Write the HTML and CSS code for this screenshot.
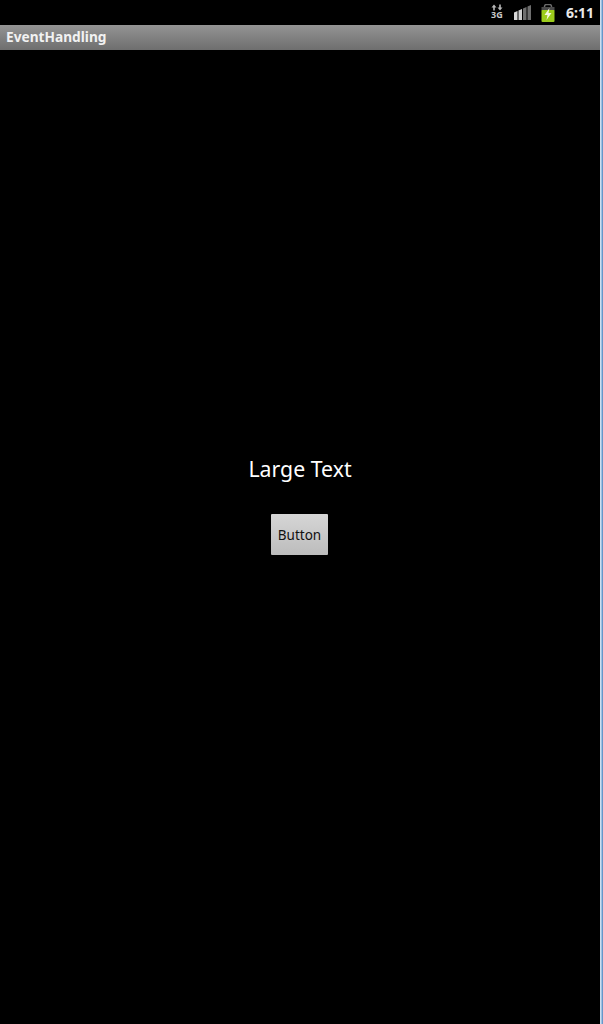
FILE: index.html
```html
<!DOCTYPE html>
<html lang="en">
<head>
    <meta charset="UTF-8">
    <title>EventHandling</title>
    <link rel="stylesheet" href="styles.css">
</head>
<body>
    <div class="screen">
        <div class="status-bar">
            <svg class="icon-data" width="12" height="17" viewBox="0 0 12 17">
                <path d="M3 0.5 L0.5 3.5 H2.2 V6.5 H3.8 V3.5 H5.5 Z M8.2 0.5 V3.5 H6.5 L9 6.5 L11.5 3.5 H9.8 V0.5 Z" fill="#b8b8b8"/>
                <text x="0" y="14" class="icon-data-text">3G</text>
            </svg>
            <svg class="icon-signal" width="17" height="15" viewBox="0 0 17 15">
                <path d="M0 7.5 L3.5 6 V15 H0 Z" fill="#dadada"/>
                <path d="M4.5 5.5 L8 4 V15 H4.5 Z" fill="#d0d0d0"/>
                <path d="M9 3.5 L12.5 2 V15 H9 Z" fill="#6e6e6e"/>
                <path d="M13.5 1.5 L17 0 V15 H13.5 Z" fill="#6e6e6e"/>
            </svg>
            <svg class="icon-battery" width="14" height="18" viewBox="0 0 14 18">
                <path d="M3.5 5 V2.5 Q3.5 0.5 5.5 0.5 H8.5 Q10.5 0.5 10.5 2.5 V5" fill="none" stroke="#6a6a6a" stroke-width="1.5"/>
                <rect x="0.5" y="3" width="13" height="4" fill="#4a4a4a"/>
                <rect x="0.5" y="6" width="13" height="12" rx="1" fill="#9ccc1c"/>
                <path d="M8.5 4 L3.5 11 H6.5 L5.5 16 L10.5 9 H7.5 Z" fill="#f4f7e0"/>
            </svg>
            <span class="clock">6:11</span>
        </div>
        <div class="title-bar">EventHandling</div>
        <div class="content">
            <div class="large-text">Large Text</div>
            <button class="btn">Button</button>
        </div>
    </div>
    <div class="edge"></div>
</body>
</html>
```

FILE: styles.css
```css
html, body {
    height: 100%;
}
body {
    margin: 0;
    display: flex;
    background: #000;
    font-family: "Noto Sans", "Open Sans", sans-serif;
    overflow: hidden;
}
.screen {
    width: 600px;
    height: 1024px;
    display: flex;
    flex-direction: column;
    background: #000;
}
.status-bar {
    height: 25px;
    display: flex;
    align-items: center;
    justify-content: flex-end;
    padding-right: 6px;
    box-sizing: border-box;
}
.icon-data {
    margin-right: 11px;
}
.icon-data-text {
    font-family: "Noto Sans", sans-serif;
    font-size: 9px;
    font-weight: bold;
    fill: #c8c8c8;
}
.icon-signal {
    margin-right: 10px;
}
.icon-battery {
    margin-right: 11px;
}
.clock {
    color: #e8e8e8;
    font-size: 14px;
    font-weight: bold;
}
.title-bar {
    height: 25px;
    line-height: 24px;
    padding-left: 6px;
    background: linear-gradient(#949494, #6e6e6e);
    color: #f2f2f2;
    font-size: 13.7px;
    font-weight: bold;
    box-sizing: border-box;
}
.content {
    flex: 1;
    display: flex;
    flex-direction: column;
    align-items: center;
    padding-top: 405px;
}
.large-text {
    color: #fff;
    font-size: 21.3px;
    line-height: 28px;
}
.btn {
    width: 57px;
    height: 41px;
    margin-top: 31px;
    margin-right: 1px;
    padding: 0;
    border: 0;
    border-radius: 1px;
    background: linear-gradient(#d6d6d6, #bcbcbc);
    color: #111;
    font-family: "Noto Sans", "Open Sans", sans-serif;
    font-size: 13.5px;
}
.edge {
    width: 3px;
    height: 1024px;
    background: linear-gradient(90deg, #e4ecf5, #9cc0e2 50%, #4a82bc);
}
```
